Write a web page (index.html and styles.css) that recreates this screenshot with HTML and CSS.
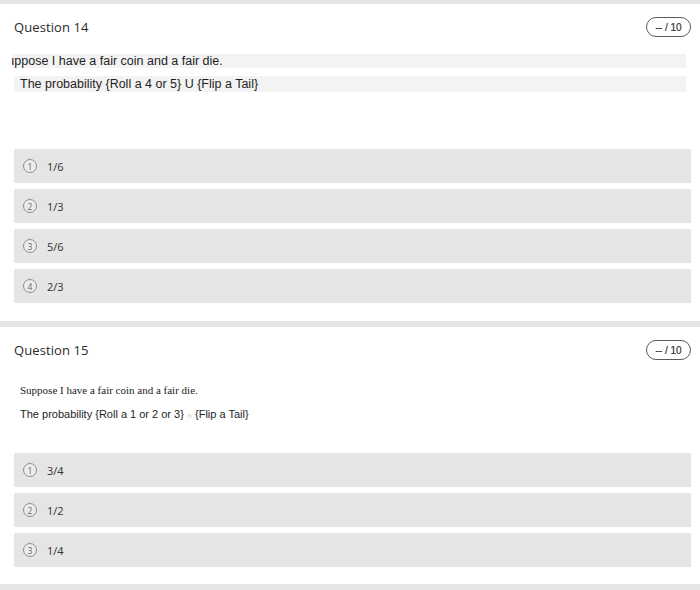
FILE: index.html
```html
<!DOCTYPE html>
<html>
<head>
<meta charset="utf-8">
<link rel="stylesheet" href="styles.css">
</head>
<body>
<div class="band band-top"></div>
<section class="question q14">
  <div class="qhead">
    <div class="qtitle">Question 14</div>
    <div class="badge">-- / 10</div>
  </div>
  <div class="stem">
    <div class="line line1"><span class="clip">Suppose I have a fair coin and a fair die.</span></div>
    <div class="line line2">The probability {Roll a 4 or 5} U {Flip a Tail}</div>
  </div>
  <div class="options">
    <div class="opt"><span class="num">1</span><span class="otext">1/6</span></div>
    <div class="opt"><span class="num">2</span><span class="otext">1/3</span></div>
    <div class="opt"><span class="num">3</span><span class="otext">5/6</span></div>
    <div class="opt"><span class="num">4</span><span class="otext">2/3</span></div>
  </div>
</section>
<div class="band band-mid"></div>
<section class="question q15">
  <div class="qhead">
    <div class="qtitle">Question 15</div>
    <div class="badge">-- / 10</div>
  </div>
  <div class="stem2">
    <div class="serif">Suppose I have a fair coin and a fair die.</div>
    <div class="sans">The probability {Roll a 1 or 2 or 3} <span class="cap">∩</span> {Flip a Tail}</div>
  </div>
  <div class="options">
    <div class="opt"><span class="num">1</span><span class="otext">3/4</span></div>
    <div class="opt"><span class="num">2</span><span class="otext">1/2</span></div>
    <div class="opt"><span class="num">3</span><span class="otext">1/4</span></div>
  </div>
</section>
<div class="band band-bottom"></div>
</body>
</html>
```

FILE: styles.css
```css
html, body {
  margin: 0;
  padding: 0;
  background: #ffffff;
  width: 700px;
  height: 590px;
  overflow: hidden;
}

.band {
  background: #e6e6e6;
}
.band-top { height: 4px; }
.band-mid { height: 6px; }
.band-bottom { height: 6px; }

.question {
  padding: 0 9px 0 14px;
}
.q14 { height: 317px; }
.q15 { height: 257px; }

.qhead {
  display: flex;
  align-items: center;
  justify-content: space-between;
  height: 20px;
  padding-top: 13px;
}

.qtitle {
  font-family: "Open Sans", sans-serif;
  font-size: 13px;
  color: #2b2b2b;
  letter-spacing: 0.1px;
}

.badge {
  box-sizing: border-box;
  width: 45px;
  height: 20px;
  border: 1px solid #5a5a5a;
  border-radius: 10px;
  font-family: "Liberation Sans", Arial, sans-serif;
  font-size: 10px;
  color: #333;
  display: flex;
  align-items: center;
  justify-content: center;
  -webkit-text-stroke: 0.2px #333;
}

.stem {
  margin: 17px 5px 0 -2px;
  display: flex;
  flex-direction: column;
  gap: 8px;
  font-family: "Liberation Sans", Arial, sans-serif;
  font-size: 12.5px;
  color: #1e1e1e;
}
.line {
  background: #f3f3f3;
  height: 14px;
  line-height: 14px;
  white-space: nowrap;
  overflow: hidden;
}
.line2 {
  height: 16px;
  line-height: 17px;
  padding-left: 6px;
  margin-left: 2px;
}
.clip {
  display: inline-block;
  margin-left: -13px;
}

.options {
  display: flex;
  flex-direction: column;
  gap: 6px;
}
.q14 .options { margin-top: 57px; }
.q15 .options { margin-top: 30px; }

.opt {
  background: #e5e5e5;
  height: 34px;
  display: flex;
  align-items: center;
  padding-left: 9px;
}
.num {
  box-sizing: border-box;
  width: 14px;
  height: 14px;
  border: 1px solid #8e8e8e;
  border-radius: 50%;
  font-family: "Open Sans", sans-serif;
  font-size: 8.5px;
  color: #666;
  display: flex;
  align-items: center;
  justify-content: center;
  background: #ececec;
}
.otext {
  margin-left: 10px;
  font-family: "Open Sans", sans-serif;
  font-size: 11px;
  color: #333;
}

.stem2 {
  margin: 23px 0 0 6px;
  display: flex;
  flex-direction: column;
  gap: 10px;
}
.serif {
  font-family: "Liberation Serif", "Times New Roman", serif;
  font-size: 11px;
  color: #222;
  line-height: 14px;
}
.sans {
  font-family: "Liberation Sans", Arial, sans-serif;
  font-size: 11px;
  color: #1e1e1e;
  line-height: 14px;
}
.cap {
  font-size: 7px;
  color: #888;
}
```
